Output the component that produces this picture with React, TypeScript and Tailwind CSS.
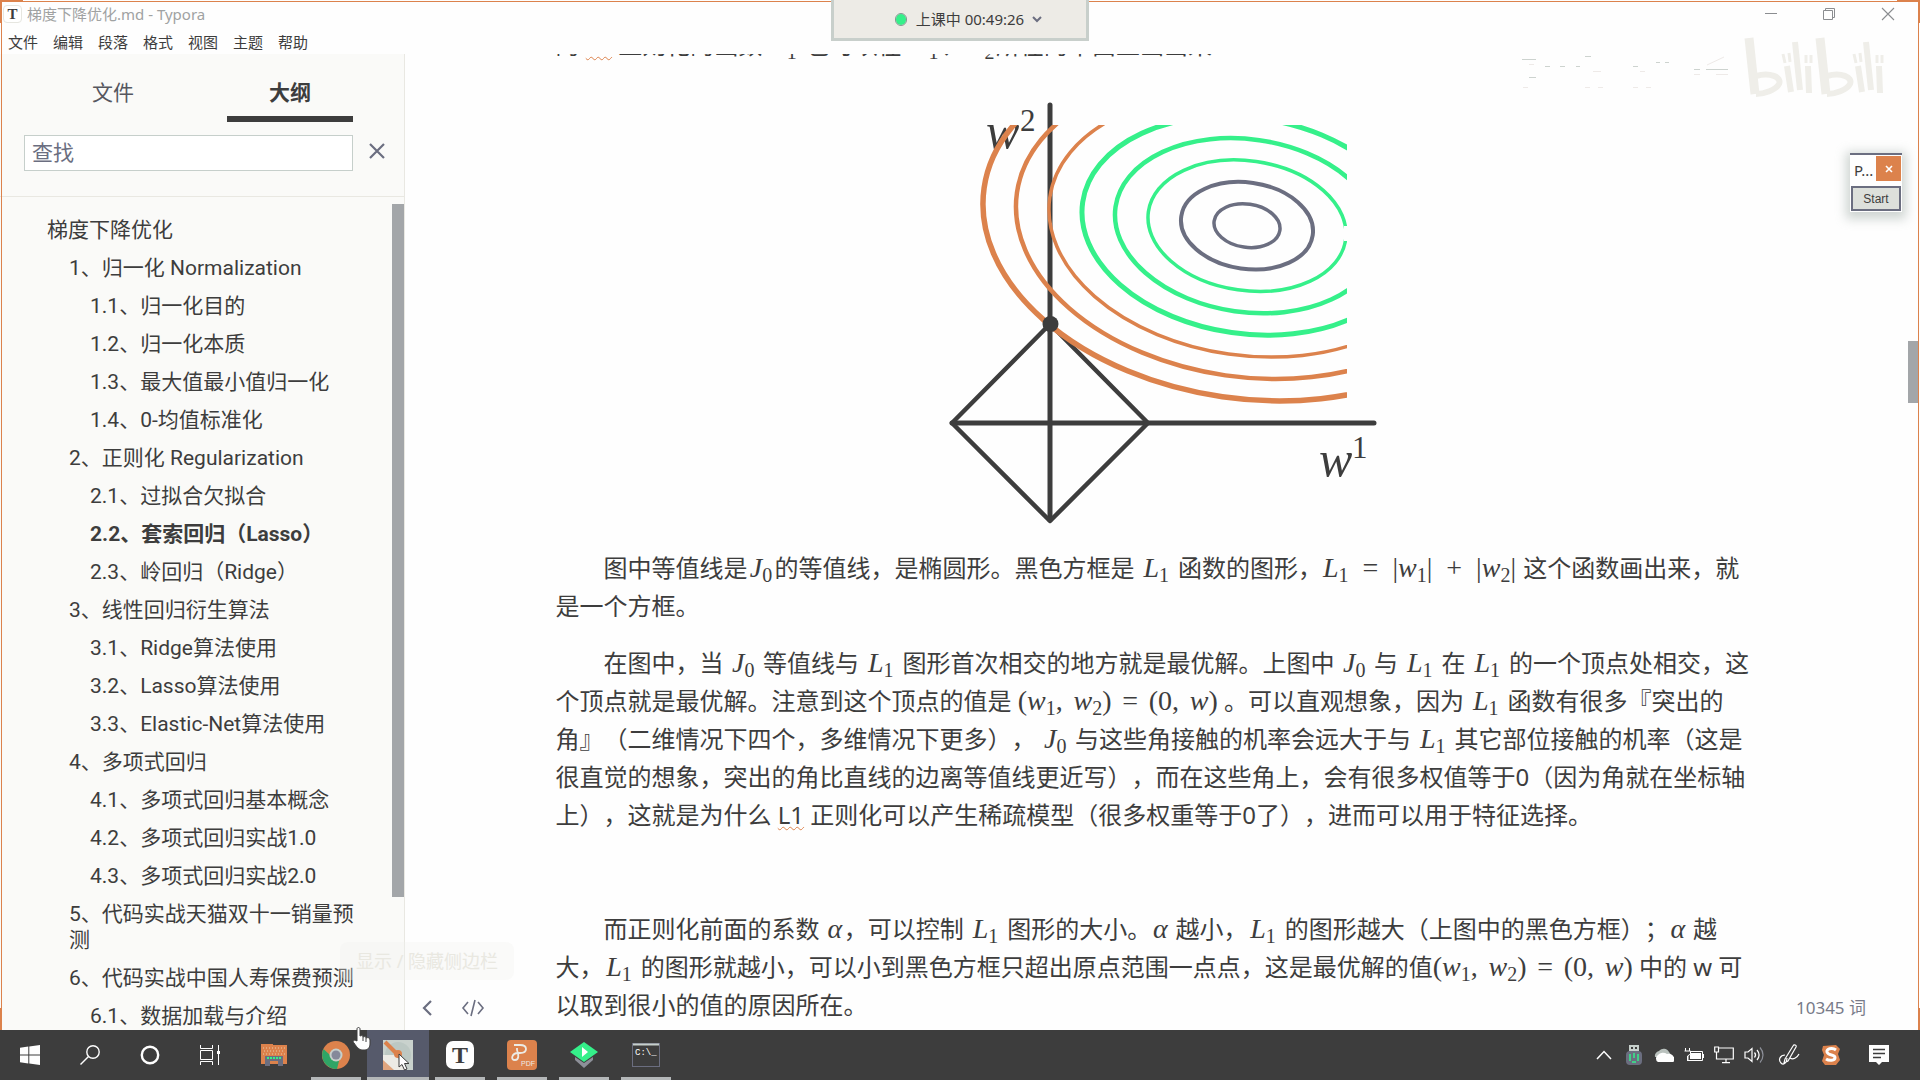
import React from "react";

const UI = "font-['Noto_Sans','Noto_Sans_CJK_SC',sans-serif]";
const INK = "#3d3d3d";
const SLATE = "#6b6e80";
const ORANGE = "#dc824c";
const GREEN = "#35f08a";

const menus = ["文件", "编辑", "段落", "格式", "视图", "主题", "帮助"];

type Entry = { level: 0 | 1 | 2; text: string; current?: boolean };

const outline: Entry[] = [
  { level: 0, text: "梯度下降优化" },
  { level: 1, text: "1、归一化 Normalization" },
  { level: 2, text: "1.1、归一化目的" },
  { level: 2, text: "1.2、归一化本质" },
  { level: 2, text: "1.3、最大值最小值归一化" },
  { level: 2, text: "1.4、0-均值标准化" },
  { level: 1, text: "2、正则化 Regularization" },
  { level: 2, text: "2.1、过拟合欠拟合" },
  { level: 2, text: "2.2、套索回归（Lasso）", current: true },
  { level: 2, text: "2.3、岭回归（Ridge）" },
  { level: 1, text: "3、线性回归衍生算法" },
  { level: 2, text: "3.1、Ridge算法使用" },
  { level: 2, text: "3.2、Lasso算法使用" },
  { level: 2, text: "3.3、Elastic-Net算法使用" },
  { level: 1, text: "4、多项式回归" },
  { level: 2, text: "4.1、多项式回归基本概念" },
  { level: 2, text: "4.2、多项式回归实战1.0" },
  { level: 2, text: "4.3、多项式回归实战2.0" },
  { level: 1, text: "5、代码实战天猫双十一销量预测" },
  { level: 1, text: "6、代码实战中国人寿保费预测" },
  { level: 2, text: "6.1、数据加载与介绍" },
];

const indent = { 0: "pl-[47px]", 1: "pl-[69px]", 2: "pl-[90px]" };

/* ---------- title bar ---------- */

function TitleBar() {
  return (
    <header className="shrink-0">
      <div className="flex h-[30px] items-center justify-between pb-[2px] pl-[3px] pr-[2px] text-[15px] leading-5 text-[#a0a2a2]">
        <div className="flex items-center gap-[5px]">
          <span className="flex h-[18px] w-[19px] items-center justify-center rounded border border-[#e6e6e0] bg-white font-['Liberation_Serif',serif] text-[15px] font-bold leading-none text-[#3d3d3d]">
            T
          </span>
          <span>梯度下降优化.md - Typora</span>
        </div>
        <div className="flex">
          <button aria-label="最小化" className="flex h-7 w-[58px] items-center justify-center">
            <svg width="14" height="14" viewBox="0 0 14 14"><path d="M1 6.5H13" stroke="#8b8d90" /></svg>
          </button>
          <button aria-label="还原" className="flex h-7 w-[58px] items-center justify-center">
            <svg width="14" height="14" viewBox="0 0 14 14" fill="none" stroke="#8b8d90"><path d="M1.5 3.5H10.5V12.5H1.5ZM3.5 3.5V1.5H12.5V10.5H10.5" /></svg>
          </button>
          <button aria-label="关闭" className="flex h-7 w-[60px] items-center justify-center">
            <svg width="14" height="14" viewBox="0 0 14 14"><path d="M1 1L13 13M13 1L1 13" stroke="#8b8d90" strokeWidth="1.1" /></svg>
          </button>
        </div>
      </div>
      <nav className="flex h-6 items-center gap-[15px] pl-2 text-[15px] leading-5 text-[#3d3d3d]">
        {menus.map((m) => (
          <button key={m}>{m}</button>
        ))}
      </nav>
    </header>
  );
}

/* ---------- sidebar ---------- */

function Sidebar() {
  return (
    <aside className="relative flex w-[405px] shrink-0 flex-col border-r border-[#e9e8e2] bg-[#fafaf8] font-['Roboto','Noto_Sans_CJK_SC',sans-serif] text-[21px] leading-[26px] text-[#3d3d3d]">
      <div className="flex gap-[51px] pl-[50px] pt-5">
        <button className="h-[48px] w-[126px] border-b-[6px] border-transparent pb-1 text-[#55575f]">文件</button>
        <button className="h-[48px] w-[126px] border-b-[6px] border-[#3d3d3d] pb-1 font-bold">大纲</button>
      </div>
      <div className="mt-[13px] flex items-center gap-4 border-b border-[#e9e8e2] pb-[25px] pl-6">
        <input
          aria-label="查找"
          placeholder="查找"
          className="h-9 w-[329px] border border-[#c6cfcb] bg-white px-[7px] placeholder:text-[#6b6e80] placeholder:opacity-100"
        />
        <button aria-label="清除" className="pb-1">
          <svg width="16" height="16" viewBox="0 0 16 16"><path d="M1 1L15 15M15 1L1 15" stroke={SLATE} strokeWidth="2.2" /></svg>
        </button>
      </div>
      <nav className="min-h-0 flex-1 overflow-hidden pr-[42px] pt-[14px]">
        {outline.map((e) => (
          <a
            key={e.text}
            href="#"
            className={`block break-all py-[6px] ${indent[e.level]} ${e.current ? "font-bold" : ""}`}
          >
            {e.text}
          </a>
        ))}
      </nav>
      <div className="absolute right-0 top-[150px] h-[693px] w-3 bg-[#a3a6a9]" />
    </aside>
  );
}

/* ---------- formulas ---------- */

function Sym({ v, n }: { v: string; n?: string }) {
  return (
    <span>
      <i>{v}</i>
      {n && <sub className="static align-[-5px] text-[20px] leading-none">{n}</sub>}
    </span>
  );
}

const MATH = "indent-0 font-['Liberation_Serif',serif] text-[28px] leading-none";

function J0() {
  return <span className={`inline-flex w-[27px] items-baseline justify-center ${MATH}`}><Sym v="J" n="0" /></span>;
}
function L1() {
  return <span className={`inline-flex w-[31px] items-baseline justify-center ${MATH}`}><Sym v="L" n="1" /></span>;
}
function W({ n }: { n: string }) {
  return <span className={`inline-flex w-[32px] items-baseline justify-center ${MATH}`}><Sym v="w" n={n} /></span>;
}
function Alpha() {
  return <span className={`inline-flex w-[18px] items-baseline justify-center ${MATH}`}><Sym v="α" /></span>;
}
function Norm() {
  return (
    <span className={`inline-flex w-[195px] items-baseline justify-between px-px ${MATH}`}>
      <Sym v="L" n="1" />
      <span>=</span>
      <span>|<Sym v="w" n="1" />|</span>
      <span>+</span>
      <span>|<Sym v="w" n="2" />|</span>
    </span>
  );
}
function Vertex() {
  return (
    <span className={`inline-flex w-[200px] items-baseline justify-between ${MATH}`}>
      <span>(<Sym v="w" n="1" />,</span>
      <span><Sym v="w" n="2" />)</span>
      <span>=</span>
      <span>(0,</span>
      <span><Sym v="w" />)</span>
    </span>
  );
}
function Misspelt({ children }: { children: React.ReactNode }) {
  return <span className="underline decoration-[#dc824c] decoration-wavy decoration-1 underline-offset-2">{children}</span>;
}

/* ---------- contour plot ---------- */

const levels = [
  { k: 1, c: SLATE, w: 3.5 },
  { k: 2, c: SLATE, w: 4 },
  { k: 3, c: GREEN, w: 3.5 },
  { k: 4, c: GREEN, w: 4.5 },
  { k: 5, c: GREEN, w: 5 },
  { k: 6, c: ORANGE, w: 3.5 },
  { k: 7, c: ORANGE, w: 4.5 },
  { k: 8, c: ORANGE, w: 5.5 },
];

function Contours() {
  return (
    <svg width="460" height="447" viewBox="926 83 460 447" className="mx-auto block" role="img" aria-label="L1 正则化等值线图">
      <clipPath id="plot"><path d="M930 125H1347V226H1344V241H1347V425H930Z" /></clipPath>
      <g fill={INK} fontFamily="'Liberation Serif', serif">
        <text x="986" y="148" fontSize="50" fontStyle="italic">w</text>
        <text x="1020" y="131" fontSize="31">2</text>
        <text x="1319" y="476" fontSize="50" fontStyle="italic">w</text>
        <text x="1352" y="458" fontSize="31">1</text>
      </g>
      <g stroke={INK} strokeLinecap="round" strokeLinejoin="round" fill="none">
        <path d="M1050 105V520M952 423H1374" strokeWidth="5" />
        <path d="M1050 324L1148 423L1050 521L952 423Z" strokeWidth="4.5" />
      </g>
      <g clipPath="url(#plot)" fill="none">
        {levels.map(({ k, c, w }) => (
          <ellipse key={k} cx="1247" cy="225.7" rx={33.2 * k} ry={21.6 * k} transform="rotate(8.2 1247 225.7)" stroke={c} strokeWidth={w} />
        ))}
      </g>
      <circle cx="1050.5" cy="324" r="8" fill={INK} />
    </svg>
  );
}

/* ---------- document ---------- */

function Document() {
  return (
    <main className="relative min-w-0 flex-1 overflow-hidden bg-[#fefefe] pr-[14px]">
      <article className="mx-auto -mt-[28px] flex max-w-[1200px] flex-col gap-[19px] whitespace-nowrap text-[24px] leading-[38px] text-[#3d3d3d] [text-spacing-trim:space-all]">
        <p className="h-[38px]">
          的 <Misspelt>L1</Misspelt> 正则化的函数 <L1 /> 也可以在 <W n="1" />、<W n="2" />所在的平面上画出来
        </p>
        <Contours />
        <p className="indent-[48px]">
          图中等值线是<J0 />的等值线，是椭圆形。黑色方框是 <L1 /> 函数的图形，<Norm /> 这个函数画出来，就<br />
          是一个方框。
        </p>
        <p className="indent-[48px]">
          在图中，当 <J0 /> 等值线与 <L1 /> 图形首次相交的地方就是最优解。上图中 <J0 /> 与 <L1 /> 在 <L1 /> 的一个顶点处相交，这<br />
          个顶点就是最优解。注意到这个顶点的值是 <Vertex /> 。可以直观想象，因为 <L1 /> 函数有很多『突出的<br />
          角』（二维情况下四个，多维情况下更多）， <J0 /> 与这些角接触的机率会远大于与 <L1 /> 其它部位接触的机率（这是<br />
          很直觉的想象，突出的角比直线的边离等值线更近写），而在这些角上，会有很多权值等于0（因为角就在坐标轴<br />
          上），这就是为什么 <Misspelt>L1</Misspelt> 正则化可以产生稀疏模型（很多权重等于0了），进而可以用于特征选择。
        </p>
        <p className="h-[38px]" />
        <p className="indent-[48px]">
          而正则化前面的系数 <Alpha />，可以控制 <L1 /> 图形的大小。<Alpha /> 越小，<L1 /> 的图形越大（上图中的黑色方框）；<Alpha /> 越<br />
          大，<L1 /> 的图形就越小，可以小到黑色方框只超出原点范围一点点，这是最优解的值<Vertex /> 中的 w 可<br />
          以取到很小的值的原因所在。
        </p>
      </article>

      <div className="absolute right-[2px] top-[287px] h-[62px] w-[10px] bg-[#a3a6a9]" />

      <div className="absolute inset-x-0 bottom-0 flex h-[44px] items-center justify-between pl-4 pr-[54px] text-[17px] leading-6 text-[#777a88]">
        <div className="flex items-center gap-[26px]">
          <button aria-label="隐藏侧边栏">
            <svg width="14" height="18" viewBox="0 0 14 18" fill="none"><path d="M10 2L3 9L10 16" stroke={SLATE} strokeWidth="2.2" /></svg>
          </button>
          <button aria-label="源代码模式">
            <svg width="24" height="18" viewBox="0 0 24 18" fill="none" stroke={SLATE} strokeWidth="1.6"><path d="M7 3L2 9L7 15M17 3L22 9L17 15M14 1L10 17" /></svg>
          </button>
        </div>
        <button>10345 词</button>
      </div>
    </main>
  );
}

/* ---------- overlays ---------- */

function SessionTimer() {
  return (
    <button className="absolute left-1/2 top-0 flex h-[41px] w-[258px] -translate-x-1/2 items-center justify-center gap-[10px] border-x-[3px] border-b-[3px] border-[#c8cfcb] bg-[#edebe6] pl-[18px] text-[15px] leading-5 text-[#3d3d3d]">
      <span className="h-[11px] w-[10px] rounded-full bg-[#35f08a] outline outline-1 outline-[#7f9a90]" />
      <span className="flex items-center gap-2">
        上课中 00:49:26
        <svg width="10" height="8" viewBox="0 0 10 8" fill="none"><path d="M1 2L5 6L9 2" stroke={SLATE} strokeWidth="2" /></svg>
      </span>
    </button>
  );
}

function Watermark() {
  return (
    <svg className="pointer-events-none absolute right-[34px] top-[36px]" width="364" height="64" viewBox="1522 36 364 64" fill="none">
      <g stroke="#cdd3cf" strokeWidth="1">
        <path d="M1522 59.5H1536M1545 66.5H1550M1560 66.5H1565M1576 66.5H1580M1585 56.5H1591M1633 66.5H1638M1656 62.5H1660M1665 62.5H1669M1529 77.5H1536M1694 69.5H1700M1706 69.5H1728" />
      </g>
      <g stroke="#eeeae8" strokeWidth="1">
        <path d="M1529 64.5H1534M1523 87.5H1528M1585 87.5H1590M1598 87.5H1603M1633 87.5H1638M1646 87.5H1651M1694 74.5H1700M1716 74.5H1728M1593 71.5H1601M1640 71.5H1645M1707 65L1724 57" />
      </g>
      <g id="bili" stroke="#efeee9" fill="none">
        <path d="M1749 38L1755 94" strokeWidth="9" />
        <path d="M1756 76C1770 72 1782 77 1779 84C1776 90 1764 94 1756 94" strokeWidth="6" />
        <path d="M1787 66L1791 92M1795 42L1800 90M1808 66L1809 93" strokeWidth="6" />
        <path d="M1783 54L1785 63M1789 53L1790 62M1806 55V63M1811 55V63" strokeWidth="3" />
      </g>
      <use href="#bili" x="71" />
    </svg>
  );
}

function StartPanel() {
  return (
    <div className="absolute right-[18px] top-[153px] w-[52px] border-t-2 border-[#6b6e80] bg-[#fefefe] shadow-[0_3px_10px_4px_rgba(150,165,158,0.45)]">
      <div className="flex h-[31px] items-start justify-between pl-1 pr-px pt-px text-[15px] leading-[28px] text-[#3d3d3d]">
        <span>P...</span>
        <button aria-label="关闭面板" className="flex h-[25px] w-[25px] items-center justify-center bg-[#dc824c]">
          <svg width="8" height="8" viewBox="0 0 8 8"><path d="M1 1L7 7M7 1L1 7" stroke="#fff" strokeWidth="1.6" /></svg>
        </button>
      </div>
      <button className="mx-px mb-px flex h-[25px] w-[50px] items-center justify-center border-2 border-[#6b6e80] bg-[#dde0db] font-['Liberation_Sans',sans-serif] text-[12px] leading-4 text-[#3d3d3d]">
        Start
      </button>
    </div>
  );
}

function WindowFrame() {
  return (
    <div className="pointer-events-none absolute inset-x-0 bottom-[50px] top-0">
      <div className="absolute inset-x-px bottom-0 top-px border-x border-t border-[#dc824c]" />
      <div className="absolute left-0 top-0 h-[23px] w-[23px] border-l-2 border-t-2 border-[#dc824c]" />
      <div className="absolute right-0 top-0 h-[23px] w-[23px] border-r-2 border-t-2 border-[#dc824c]" />
      <div className="absolute bottom-0 left-0 h-[22px] w-[2px] bg-[#dc824c]" />
      <div className="absolute bottom-0 right-0 h-[22px] w-[2px] bg-[#dc824c]" />
    </div>
  );
}

/* ---------- taskbar ---------- */

function TaskButton({ label, open, active, children }: { label: string; open?: boolean; active?: boolean; children: React.ReactNode }) {
  return (
    <button aria-label={label} className={`relative flex h-full w-[62px] items-center justify-center ${active ? "bg-[#565a6b]" : ""}`}>
      {children}
      {open && <span className={`absolute bottom-0 h-[3px] bg-[#b4b7b8] ${active ? "inset-x-0" : "inset-x-[6px]"}`} />}
    </button>
  );
}

function Sys({ label, className, children }: { label: string; className: string; children: React.ReactNode }) {
  return <button aria-label={label} className={`flex h-full items-center justify-center ${className}`}>{children}</button>;
}

function Taskbar() {
  return (
    <footer className="flex h-[50px] shrink-0 justify-between bg-[#3d3d3d]">
      <div className="flex">
        <Sys label="开始" className="w-[60px]">
          <svg width="20" height="20" viewBox="0 0 20 20" fill="#fefefe"><path d="M0 2.8L8.3 1.6V9.4H0ZM9.3 1.4L20 0V9.4H9.3ZM0 10.4H8.3V18.4L0 17.2ZM9.3 10.4H20V20L9.3 18.6Z" /></svg>
        </Sys>
        <Sys label="搜索" className="w-[60px]">
          <svg width="20" height="20" viewBox="0 0 20 20" fill="none" stroke="#fefefe" strokeWidth="1.4"><circle cx="13" cy="7" r="6.2" /><path d="M8.5 11.5L.5 19.5" /></svg>
        </Sys>
        <Sys label="Cortana" className="w-[60px]">
          <svg width="20" height="20" viewBox="0 0 20 20" fill="none"><circle cx="10" cy="10" r="8.2" stroke="#fefefe" strokeWidth="2.4" /></svg>
        </Sys>
        <Sys label="任务视图" className="w-[60px]">
          <svg width="20" height="20" viewBox="0 0 20 20" fill="none" stroke="#fefefe"><path d="M.5 0V3.5H12.5V0M.5 5.5H12.5V14.5H.5ZM.5 20V16.5H12.5V20M18.5 0V20" /><rect x="17" y="6" width="3" height="3" fill="#fefefe" stroke="none" /></svg>
        </Sys>
        <div className="ml-[3px] flex">
          <TaskButton label="文件资源管理器">
            <svg width="26" height="22" viewBox="0 0 26 22"><path d="M0 0H12V1H26V20H0Z" fill={ORANGE} /><path d="M2 4H24M3 7H23M2 10H24" stroke="#e8c9a8" strokeDasharray="1 2" /><path d="M4 12H22V22H17V17H9V22H4Z" fill={SLATE} /><path d="M6 14H20" stroke={GREEN} strokeWidth="2" strokeDasharray="2 1" /></svg>
          </TaskButton>
          <TaskButton label="Chrome" open>
            <svg width="28" height="28" viewBox="0 0 28 28"><circle cx="14" cy="14" r="14" fill={ORANGE} /><path d="M1.5 8A14 14 0 0 0 15 28L17 20L8 14Z" fill="#2fa566" /><circle cx="14" cy="14" r="6.5" fill="#c6cfcb" /><circle cx="14" cy="14" r="4.5" fill="#85899a" /></svg>
          </TaskButton>
          <TaskButton label="画图" open active>
            <svg width="30" height="30" viewBox="0 0 30 30"><rect width="30" height="30" fill="#c9d2cd" /><circle cx="15" cy="15" r="13" fill="#bcc8c3" /><path d="M0 15H13L22 30H0Z" fill="#ecebe5" /><path d="M0 20V30H11Z" fill="#e0a57e" /><path d="M2 2L14 14" stroke={ORANGE} strokeWidth="4" /><circle cx="15" cy="14" r="4" fill={ORANGE} /></svg>
          </TaskButton>
          <TaskButton label="Typora" open>
            <span className="flex h-[28px] w-[28px] items-center justify-center rounded-[7px] bg-[#fefefe] font-['Liberation_Serif',serif] text-[24px] font-bold leading-none text-[#3d3d3d]">T</span>
          </TaskButton>
          <TaskButton label="PDF" open>
            <svg width="30" height="30" viewBox="0 0 30 30"><rect width="30" height="30" rx="4" fill={ORANGE} /><path d="M7 5H13C21 5 21 13 13 13H11C5 13 3 20 8 20C12 20 12 15 10 10V8" fill="none" stroke="#ecebe5" strokeWidth="1.8" /><text x="14" y="26" fontSize="7" fontFamily="'Liberation Sans', sans-serif" fill="#ecebe5">PDF</text></svg>
          </TaskButton>
          <TaskButton label="课堂" open>
            <svg width="28" height="28" viewBox="0 0 28 28"><path d="M5 16L14 22L23 16V19L14 27L5 19Z" fill="#8d9099" /><path d="M14 1L28 11L14 21L0 11Z" fill={GREEN} /><path d="M12 6L18 11L12 16Z" fill="#fefefe" /></svg>
          </TaskButton>
          <TaskButton label="命令提示符" open>
            <svg width="28" height="24" viewBox="0 0 28 24"><rect x=".5" y=".5" width="27" height="23" fill={INK} stroke={SLATE} /><path d="M1 1.5H27" stroke="#c6cfcb" strokeWidth="2" /><text x="3" y="12" fontSize="9" fontFamily="'Liberation Mono', monospace" fill="#fefefe">C:\_</text></svg>
          </TaskButton>
        </div>
      </div>

      <div className="flex pr-[15px]">
        <Sys label="显示隐藏的图标" className="w-[30px]">
          <svg width="16" height="10" viewBox="0 0 16 10" fill="none"><path d="M1 9L8 1.5L15 9" stroke="#fefefe" strokeWidth="1.5" /></svg>
        </Sys>
        <Sys label="USB" className="w-[30px]">
          <svg width="16" height="20" viewBox="0 0 16 20"><path d="M3 0H13V6H3Z" fill="#c6cfcb" /><path d="M5 2H7V4H5ZM9 2H11V4H9Z" fill={INK} /><rect x="0" y="6" width="16" height="14" rx="4" fill={SLATE} /><path d="M4 9V16M8 8V13M12 9V16M6 17H10" stroke={GREEN} strokeWidth="1.5" /></svg>
        </Sys>
        <Sys label="OneDrive" className="w-[30px]">
          <svg width="20" height="14" viewBox="0 0 20 14"><path d="M1 9A5 5 0 0 1 5 3A6 6 0 0 1 15 4L18 8Z" fill="#b9c1bd" /><path d="M4 14A4 4 0 0 1 4 7A6 5 0 0 1 13 6A5 4 0 0 1 16 14Z" fill="#fefefe" /><path d="M12 6L20 9A3 3 0 0 1 17 14H10Z" fill="#fefefe" /></svg>
        </Sys>
        <Sys label="电源" className="w-[30px]">
          <svg width="20" height="14" viewBox="0 0 20 14" fill="none" stroke="#fefefe"><path d="M4 3.5H18.5V12.5H4ZM19.5 6V10" /><path d="M6 5H17V11H6Z" fill="#fefefe" stroke="none" /><path d="M1.5 0V3M5.5 0V3M.5 3H6.5V6L3.5 8V13" fill={INK} /></svg>
        </Sys>
        <Sys label="网络" className="w-[30px]">
          <svg width="20" height="18" viewBox="0 0 20 18" fill="none" stroke="#fefefe" strokeWidth="1.2"><path d="M5 2H19.3V13H5M12 13V16.5M8 16.6H16M.7 1H4.5V6H.7ZM2.5 6V13H5" /></svg>
        </Sys>
        <Sys label="音量" className="w-[30px]">
          <svg width="20" height="18" viewBox="0 0 20 18" fill="none" stroke="#fefefe" strokeWidth="1.2"><path d="M1 6V12H4L8 15.5V2.5L4 6ZM10.5 6.5C11.8 8 11.8 10 10.5 11.5M13 4C15.5 7 15.5 11 13 14" /><path d="M16 1.5C20 6 20 12 16 16.5" stroke="#8d9099" /></svg>
        </Sys>
        <Sys label="手写笔" className="w-[40px]">
          <svg width="22" height="22" viewBox="0 0 22 22" fill="none" stroke="#fefefe" strokeWidth="1.2"><path d="M7 15L15 2C16 0 19 1 18 3L10 17L6 19ZM7 11C2 11 0 16 3 19C6 22 9 18 9 14M12 14C15 16 19 14 21 10" /></svg>
        </Sys>
        <Sys label="输入法" className="w-[44px]">
          <svg width="20" height="20" viewBox="0 0 20 20"><path d="M2 1L15 0L19 4L17 9L19 15L15 20H4L1 16L3 10L1 5Z" fill={ORANGE} /><path d="M15 5C11 2 5 4 6 7C7 11 14 9 14 12.500C14 16 8 16 5 14" fill="none" stroke="#fefefe" strokeWidth="3" /></svg>
        </Sys>
        <Sys label="通知" className="w-[52px]">
          <svg width="20" height="20" viewBox="0 0 20 20"><path d="M0 0H20V17H13L10 20L7 17H0Z" fill="#fefefe" /><path d="M4 4.5H16M4 8.5H16M4 12.5H12" stroke={INK} strokeWidth="1.3" /></svg>
        </Sys>
      </div>
    </footer>
  );
}

function HandCursor() {
  return (
    <svg className="pointer-events-none absolute bottom-[29px] left-[352px]" width="20" height="24" viewBox="0 0 20 24">
      <path d="M5 2C5 0 8 0 8 2V9C10 8 11 9 11 10C13 9 14 10 14 11C16 10 18 11 18 13V17C18 20 16 23 13 23H10C7 23 4 19 2 16C0 14 2 12 5 14Z" fill="#fefefe" stroke={INK} />
      <path d="M11 10V14M14 11V15" stroke={INK} />
    </svg>
  );
}

function ArrowCursor() {
  return (
    <svg className="pointer-events-none absolute bottom-[9px] left-[398px]" width="13" height="18" viewBox="0 0 13 18">
      <path d="M1 1V14L4 11.5L6.5 17L9 16L6.5 10.5H11Z" fill="#fefefe" stroke={INK} />
    </svg>
  );
}

export default function App() {
  return (
    <div className={`relative flex h-screen flex-col overflow-hidden bg-[#fefefe] ${UI}`}>
      <TitleBar />
      <div className="flex min-h-0 flex-1">
        <Sidebar />
        <Document />
      </div>
      <Taskbar />
      <WindowFrame />
      <SessionTimer />
      <Watermark />
      <StartPanel />
      <div className="pointer-events-none absolute bottom-[100px] left-[340px] rounded-lg bg-[#f3f3ef]/30 px-4 py-[7px] text-[18px] leading-6 text-[#e9e8e1]">
        显示 / 隐藏侧边栏
      </div>
      <HandCursor />
      <ArrowCursor />
    </div>
  );
}
